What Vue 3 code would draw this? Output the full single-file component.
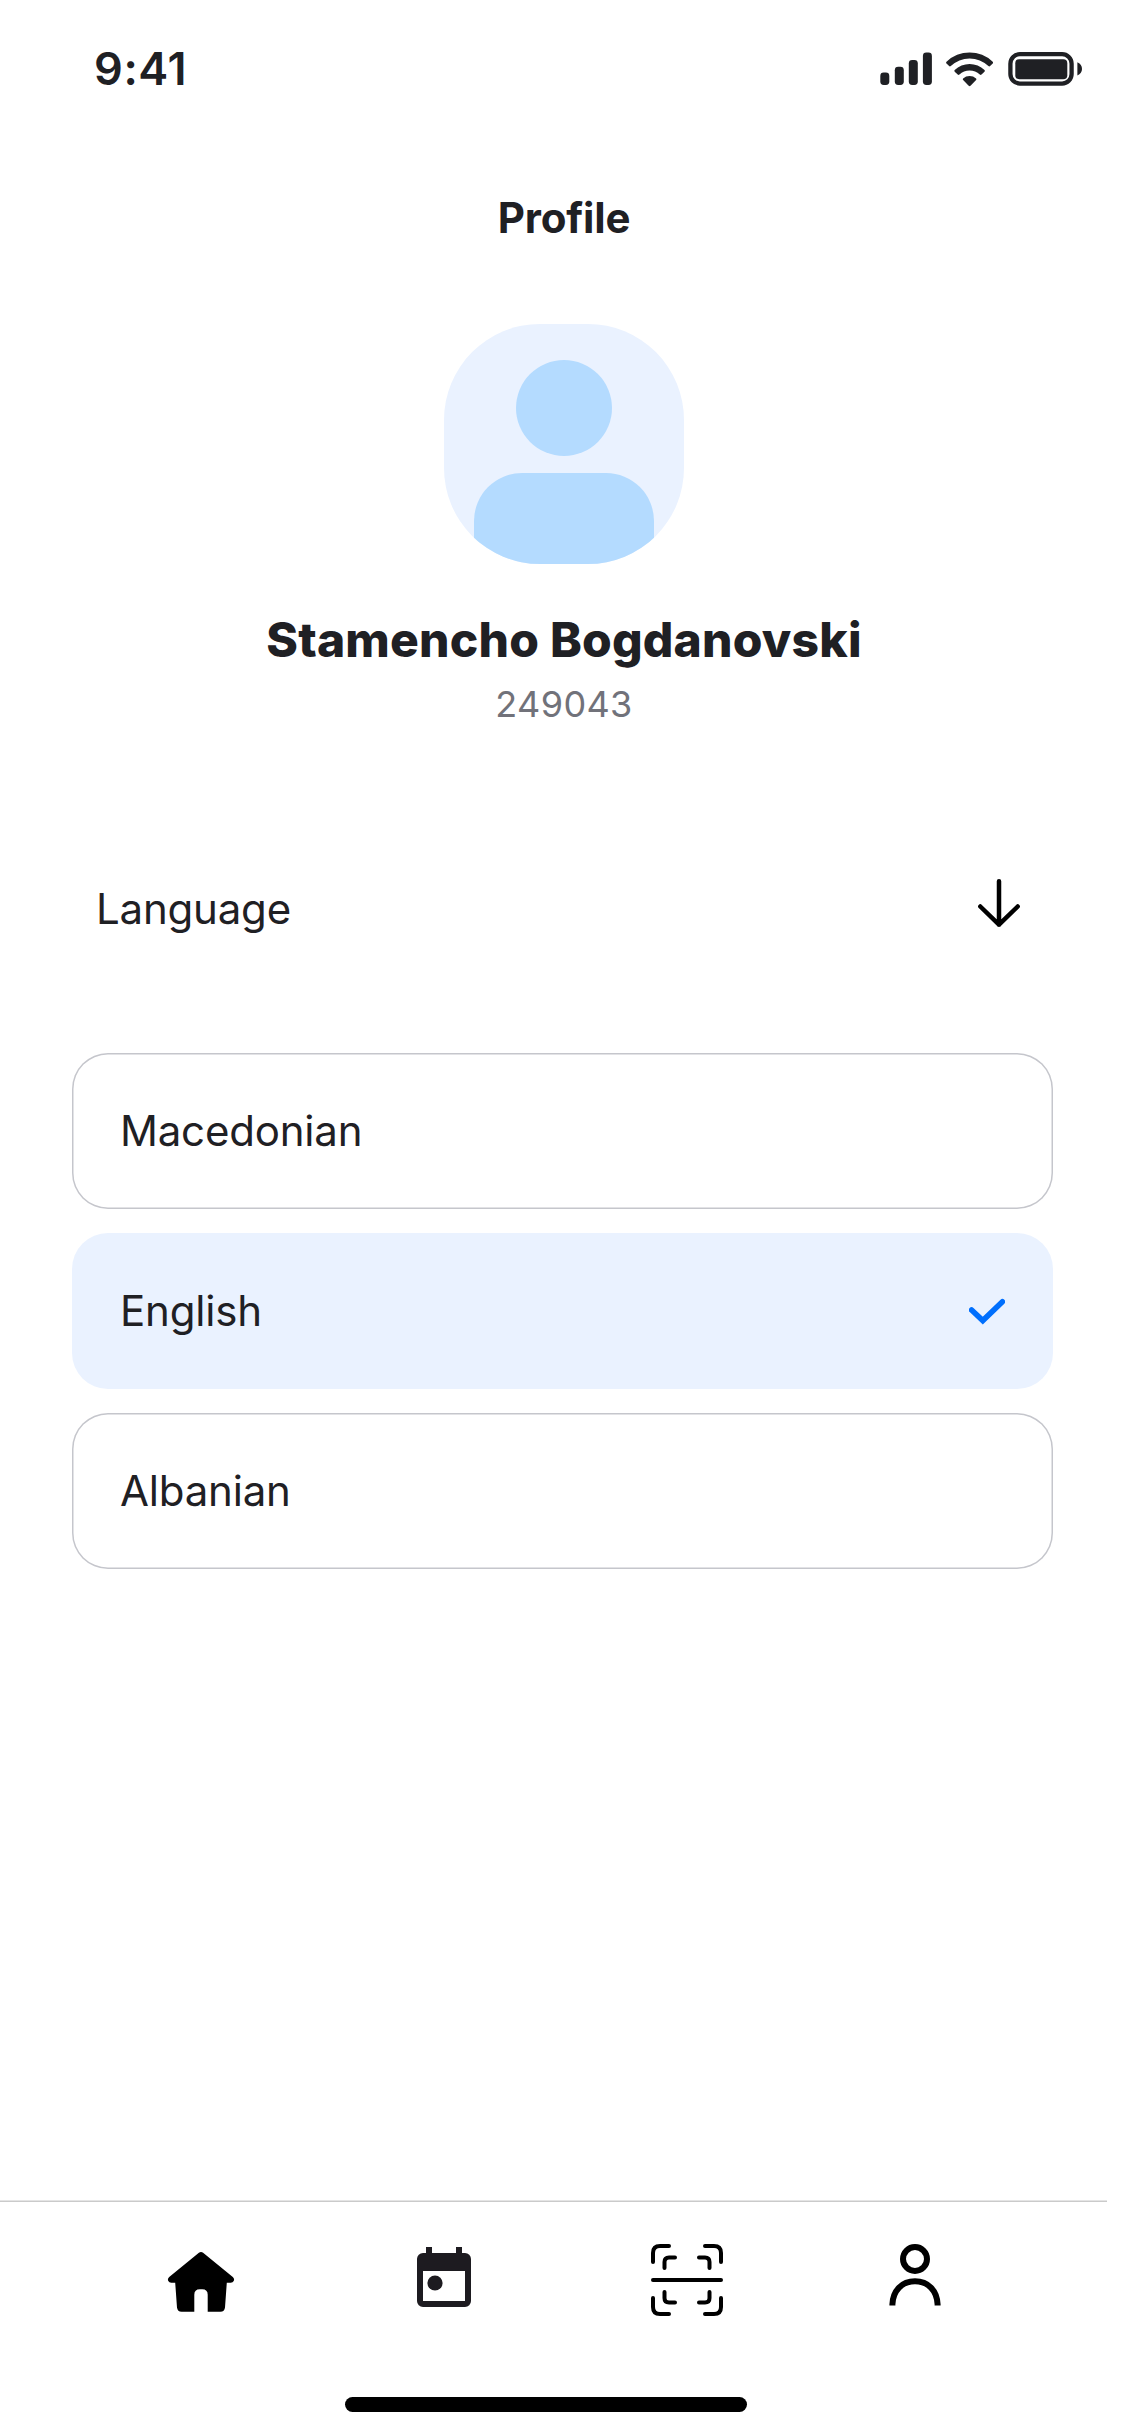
<script setup>
import { ref } from 'vue'

const languages = ['Macedonian', 'English', 'Albanian']
const selected = ref('English')
</script>

<template>
  <div class="screen">
    <header class="status">
      <span class="time">9:41</span>
      <svg class="indicators" width="204" height="36" viewBox="879 51 204 36" fill="#1f2024">
        <rect x="880.3" y="72.6" width="9" height="12.4" rx="3.4" />
        <rect x="894.8" y="66.8" width="9" height="18.2" rx="3.4" />
        <rect x="908.8" y="60" width="9" height="25" rx="3.4" />
        <rect x="922.9" y="52.5" width="9" height="32.5" rx="3.4" />
        <path d="M946.500 61.800a33.200 33.200 0 0 1 46.200 0q.8.9 0 1.700l-2.600 2.600q-.8.800-1.700 0a27 27 0 0 0-37.600 0q-.9.800-1.700 0l-2.600-2.600q-.8-.8 0-1.700z" />
        <path d="M954.700 70a21.500 21.500 0 0 1 29.800 0q.8.900 0 1.700l-3 2.900q-.8.800-1.700 0a14.800 14.800 0 0 0-20.400 0q-.9.800-1.700 0l-3-2.900q-.8-.8 0-1.700z" />
        <path d="M963.100 78.400a10 10 0 0 1 13 0q.7.800 0 1.600l-5.600 5.800q-.9.800-1.800 0l-5.600-5.800q-.7-.8 0-1.600z" />
        <rect x="1010.4" y="54.2" width="61.2" height="29.4" rx="9.5" fill="none" stroke="#1f2024" stroke-width="4.3" />
        <rect x="1015.3" y="59.2" width="52" height="20" rx="4" />
        <path d="M1077.4 62.3q4.6 2.3 4.6 6.6t-4.6 6.6z" />
      </svg>
    </header>

    <h1 class="title">Profile</h1>

    <section class="profile">
      <div class="avatar">
        <div class="head"></div>
        <div class="body"></div>
      </div>
      <h2 class="name">Stamencho Bogdanovski</h2>
      <p class="number">249043</p>
    </section>

    <div class="heading">
      <span>Language</span>
      <svg width="44" height="50" viewBox="977 878 44 50" fill="none" stroke="#000" stroke-width="4.5" stroke-linecap="round" stroke-linejoin="round">
        <path d="M999 881.3v43.4M980.3 906.5l18.7 18.2 18.7-18.2" />
      </svg>
    </div>

    <ul class="options">
      <li
        v-for="language in languages"
        :key="language"
        class="option"
        :class="{ active: language === selected }"
        @click="selected = language"
      >
        <span>{{ language }}</span>
        <svg v-if="language === selected" width="36" height="36" viewBox="969 1293 36 36" fill="none" stroke="#006ffd" stroke-width="5.5" stroke-linecap="round">
          <path d="M971.6 1310l11.2 10.600 19.600-18.900" />
        </svg>
      </li>
    </ul>

    <nav class="tabs">
      <svg width="72" height="78" viewBox="165 2241 72 78">
        <path d="M198.9 2252.8q2.1-1.500 4.200 0l29.700 24.200q2 2 .9 4-.8 1.700-3 1.700h-3.900l-1.800 24.800q-.5 4.200-4.600 4.200h-12.700v-17q0-5.500-5.500-5.500h-2.400q-5.500 0-5.500 5.500v17h-12.700q-4.100 0-4.600-4.200l-1.800-24.800h-3.900q-2.200 0-3-1.700-1.100-2 .9-4z" />
      </svg>
      <svg width="72" height="78" viewBox="408 2241 72 78" fill="#1d1b20">
        <path fill-rule="evenodd" d="M426 2247h6v6h24v-6h6v6h3a6 6 0 0 1 6 6v42a6 6 0 0 1-6 6h-42a6 6 0 0 1-6-6v-42a6 6 0 0 1 6-6h3zM423 2271v30h42v-30z" />
        <circle cx="435" cy="2283" r="7.6" />
      </svg>
      <svg width="72" height="78" viewBox="651 2241 72 78" fill="none" stroke="#000" stroke-width="4" stroke-linecap="round">
        <path d="M653 2262v-9q0-7 7-7h9M705 2246h9q7 0 7 7v9M721 2298v9q0 7-7 7h-9M669 2314h-9q-7 0-7-7v-9" />
        <path d="M664.5 2268v-6q0-4.500 4.500-4.500h6M699 2257.500h6q4.500 0 4.500 4.500v6M709.500 2292v6q0 4.500-4.500 4.500h-6M675 2302.500h-6q-4.500 0-4.500-4.500v-6" />
        <path d="M653 2280h68" />
      </svg>
      <svg width="72" height="78" viewBox="879 2241 72 78" fill="none" stroke="#000" stroke-width="6">
        <circle cx="915" cy="2259" r="12" />
        <path d="M892.400 2305.600v-1.200c.6-14 9.600-23.100 22.600-23.100s22 9.100 22.600 23.100v1.200" />
      </svg>
    </nav>
    <div class="home-bar"></div>
  </div>
</template>

<style>
body {
  background: #fff;
}
</style>

<style scoped>
.screen {
  display: flex;
  flex-direction: column;
  width: 1125px;
  height: 2436px;
  overflow: hidden;
  background: #fff;
  color: #1f2024;
  font-family: Inter, "Liberation Sans", sans-serif;
  font-size: 42px;
  line-height: 60px;
}

.status {
  display: flex;
  justify-content: space-between;
  align-items: center;
  height: 60px;
  padding: 39px 42px 0 94px;
}

.time {
  font-size: 45px;
  font-weight: 600;
  letter-spacing: 0.6px;
}

.title {
  margin: 89px 0 0 3px;
  font-size: 42px;
  font-weight: 700;
  letter-spacing: -0.2px;
  text-align: center;
}

.profile {
  display: flex;
  flex-direction: column;
  align-items: center;
  margin: 76px 0 0 3px;
}

.avatar {
  display: flex;
  flex-direction: column;
  align-items: center;
  width: 240px;
  height: 240px;
  border-radius: 96px;
  overflow: hidden;
  background: #eaf2ff;
}

.head,
.body {
  flex: none;
  background: #b4dbff;
}

.head {
  width: 96px;
  height: 96px;
  margin-top: 36px;
  border-radius: 50%;
}

.body {
  width: 180px;
  height: 120px;
  margin-top: 17px;
  border-radius: 48px 48px 0 0;
}

.name {
  margin: 46px 0 0;
  font-size: 48px;
  font-weight: 800;
  letter-spacing: 0.2px;
}

.number {
  margin: 4px 0 0;
  color: #71727a;
  font-size: 36px;
  letter-spacing: 0.36px;
}

.heading {
  display: flex;
  justify-content: space-between;
  align-items: center;
  height: 60px;
  margin: 145px 104px 0 96px;
  letter-spacing: -0.2px;
}

.heading svg {
  margin-top: -13px;
}

.options {
  display: flex;
  flex-direction: column;
  gap: 24px;
  margin: 114px 72px 0;
  padding: 0;
  list-style: none;
}

.option {
  display: flex;
  justify-content: space-between;
  align-items: center;
  height: 156px;
  padding: 0 48px;
  border-radius: 36px;
  box-shadow: inset 0 0 0 1.5px #c5c6cc;
  letter-spacing: -0.2px;
}

.option.active {
  background: #eaf2ff;
  box-shadow: none;
}

.tabs {
  display: grid;
  grid-template-columns: 243px 243px 228px 72px;
  width: 942px;
  margin-top: auto;
  padding: 41px 0 0 165px;
  background: linear-gradient(#e4e4e4 1px, #cacaca 1px) 0 0 / 1107px 2px no-repeat;
}

.home-bar {
  width: 402px;
  height: 15px;
  margin: 78px 0 24px 345px;
  border-radius: 8px;
  background: #000;
}
</style>
